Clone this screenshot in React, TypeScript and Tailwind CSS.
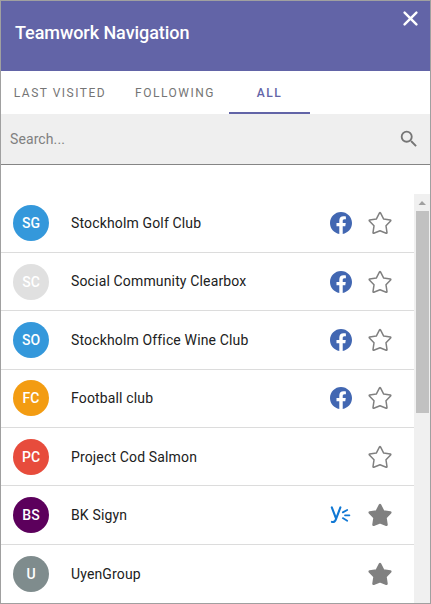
type Network = 'facebook' | 'yammer' | null;

interface Team {
  initials: string;
  name: string;
  color: string;
  network: Network;
  followed: boolean;
}

const teams: Team[] = [
  { initials: 'SG', name: 'Stockholm Golf Club', color: 'bg-[#3498db]', network: 'facebook', followed: false },
  { initials: 'SC', name: 'Social Community Clearbox', color: 'bg-[#e0e0e0]', network: 'facebook', followed: false },
  { initials: 'SO', name: 'Stockholm Office Wine Club', color: 'bg-[#3498db]', network: 'facebook', followed: false },
  { initials: 'FC', name: 'Football club', color: 'bg-[#f39c12]', network: 'facebook', followed: false },
  { initials: 'PC', name: 'Project Cod Salmon', color: 'bg-[#e74c3c]', network: null, followed: false },
  { initials: 'BS', name: 'BK Sigyn', color: 'bg-[#5c005c]', network: 'yammer', followed: true },
  { initials: 'U', name: 'UyenGroup', color: 'bg-[#7f8c8d]', network: null, followed: true },
];

function StarIcon({ filled }: { filled: boolean }) {
  return (
    <svg
      className="block h-6 w-6 shrink-0"
      viewBox="0 0 24 24"
      fill={filled ? '#808080' : 'none'}
      stroke="#808080"
      strokeWidth="1.5"
      strokeLinejoin="round"
    >
      <path d="M11.5 1.9Q12 1.2 12.5 1.9L15.7 8.1 22.3 9Q23.2 9.3 22.6 9.9L18 14.8 19 21.6Q19 22.5 18.2 22.3L12 19.8 5.8 22.3Q5 22.5 5 21.6L6 14.8 1.4 9.9Q0.8 9.3 1.7 9L8.3 8.1Z" />
    </svg>
  );
}

function FacebookIcon() {
  return (
    <svg className="block h-[22px] w-[22px] shrink-0" viewBox="0 0 24 24" fill="#4267b2">
      <path d="M24 12.073c0-6.627-5.373-12-12-12s-12 5.373-12 12c0 5.99 4.388 10.954 10.125 11.854v-8.385H7.078v-3.47h3.047V9.43c0-3.007 1.792-4.669 4.533-4.669 1.312 0 2.686.235 2.686.235v2.953H15.83c-1.491 0-1.956.925-1.956 1.874v2.25h3.328l-.532 3.47h-2.796v8.385C19.612 23.027 24 18.062 24 12.073z" />
    </svg>
  );
}

function YammerIcon() {
  return (
    <svg className="block h-[22px] w-[22px] shrink-0" viewBox="0 0 22 22" fill="none" stroke="#1078d4" strokeLinecap="round">
      <path strokeWidth="2.1" strokeLinejoin="round" d="M1.8 3.4 6.1 14.6M10.4 3.4 5.8 15.6C5.1 17.5 4 18.4 1.9 17.9" />
      <path strokeWidth="1.8" d="M12.8 8.4 17.2 6M15 11.3H19.4M12.8 14.1 17.2 16.7" />
    </svg>
  );
}

function TeamRow({ team }: { team: Team }) {
  return (
    <li className="flex h-[58.4px] items-center border-b border-[#dcdcdc] pl-3 pr-[22px] last:border-b-0">
      <span className={`flex h-9 w-9 shrink-0 items-center justify-center rounded-full text-sm font-medium text-white ${team.color}`}>
        {team.initials}
      </span>
      <span className="mb-[0.4px] ml-[22px] flex-1 whitespace-nowrap text-sm tracking-[0.15px] text-[#212121]">{team.name}</span>
      {team.network === 'facebook' && <FacebookIcon />}
      {team.network === 'yammer' && <YammerIcon />}
      <span className="ml-[16.5px]">
        <StarIcon filled={team.followed} />
      </span>
    </li>
  );
}

export default function App() {
  return (
    <div className="flex h-[604px] w-[431px] flex-col overflow-hidden border border-[#a0a0a0] bg-white font-['Roboto',sans-serif]">
      <header className="flex h-[70px] shrink-0 justify-between bg-[#6264a7] text-white">
        <h1 className="ml-[14px] mt-5 text-lg leading-6 font-medium tracking-[-0.06px]">Teamwork Navigation</h1>
        <svg className="mr-3 mt-[10px] h-[15px] w-[15px]" viewBox="0 0 15 15" fill="none" stroke="currentColor" strokeWidth="2.4" strokeLinecap="round">
          <path d="M1.6 1.6 13.4 13.4M13.4 1.6 1.6 13.4" />
        </svg>
      </header>

      <nav className="flex h-[43px] shrink-0 text-xs tracking-[1.5px] text-[#757575]">
        <span className="flex w-[118px] items-center justify-center">LAST VISITED</span>
        <span className="flex w-[112px] -mr-0.5 items-center justify-center">FOLLOWING</span>
        <span className="flex w-[81px] items-center justify-center border-b-2 border-[#6264a7] pt-0.5 font-medium text-[#6264a7]">ALL</span>
      </nav>

      <div className="flex h-[51px] shrink-0 items-center justify-between border-b border-[#858585] bg-[#efefef] pl-[9px] pr-[10px]">
        <span className="text-sm tracking-[0.1px] text-[#808080]">Search...</span>
        <svg className="h-[22px] w-[22px]" viewBox="0 0 24 24" fill="#757575">
          <path d="M15.5 14h-.79l-.28-.27A6.471 6.471 0 0 0 16 9.5 6.5 6.5 0 1 0 9.5 16c1.61 0 3.09-.59 4.23-1.57l.27.28v.79l5 4.99L20.49 19l-4.99-5zm-6 0C7.01 14 5 11.99 5 9.5S7.01 5 9.5 5 14 7.01 14 9.5 11.99 14 9.5 14z" />
        </svg>
      </div>

      <main className="mt-[29px] flex h-[409px] shrink-0">
        <ul className="w-[413px] pt-[0.5px]">
          {teams.map((team) => (
            <TeamRow key={team.initials} team={team} />
          ))}
        </ul>
        <div className="flex w-4 flex-col items-center bg-[#f0f0f0]">
          <svg className="h-[17px] w-4 shrink-0" viewBox="0 0 16 17" fill="#a0a0a0">
            <path d="M4.5 11 8 7 12 11Z" />
          </svg>
          <div className="ml-px h-[202px] w-[13px] bg-[#c1c1c1]" />
        </div>
      </main>
    </div>
  );
}
